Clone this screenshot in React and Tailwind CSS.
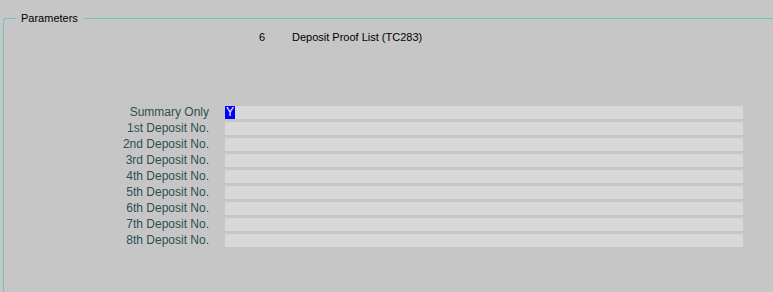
import React from 'react';

const labels = [
  'Summary Only',
  '1st Deposit No.',
  '2nd Deposit No.',
  '3rd Deposit No.',
  '4th Deposit No.',
  '5th Deposit No.',
  '6th Deposit No.',
  '7th Deposit No.',
  '8th Deposit No.',
];

const App = () => {
  return (
    <div
      className="w-[773px] h-[292px] bg-[#c6c6c6] pt-[18px] pl-[3px] overflow-hidden text-[12px]"
      style={{ fontFamily: '"Liberation Sans", Arial, sans-serif' }}
    >
      <div className="relative h-full border-l border-t border-[#6cc6c0] rounded-tl-[3px]">
        <div className="absolute left-[12px] top-[-7px] pl-[5px] pr-[6px] bg-[#c6c6c6] text-black text-[11px] leading-[13px]">
          Parameters
        </div>

        <div className="flex mt-[12px] text-[11px] leading-[13px] text-black">
          <div className="w-[255px]" />
          <div className="w-[33px]">6</div>
          <div>Deposit Proof List (TC283)</div>
        </div>

        <div className="mt-[62px] flex flex-col">
          {labels.map((label, i) => (
            <div key={label} className="flex h-[16px]">
              <div className="w-[205px] text-right text-[#2f4f4f] leading-[13px] h-[13px]">
                {label}
              </div>
              <div className="ml-[16px] w-[518px] h-[13px] bg-[#d8d8d8] leading-[13px]">
                {i === 0 && (
                  <span className="inline-block h-[13px] px-[1px] bg-[#0000ff] text-white">Y</span>
                )}
              </div>
            </div>
          ))}
        </div>
      </div>
    </div>
  );
};

export default App;
